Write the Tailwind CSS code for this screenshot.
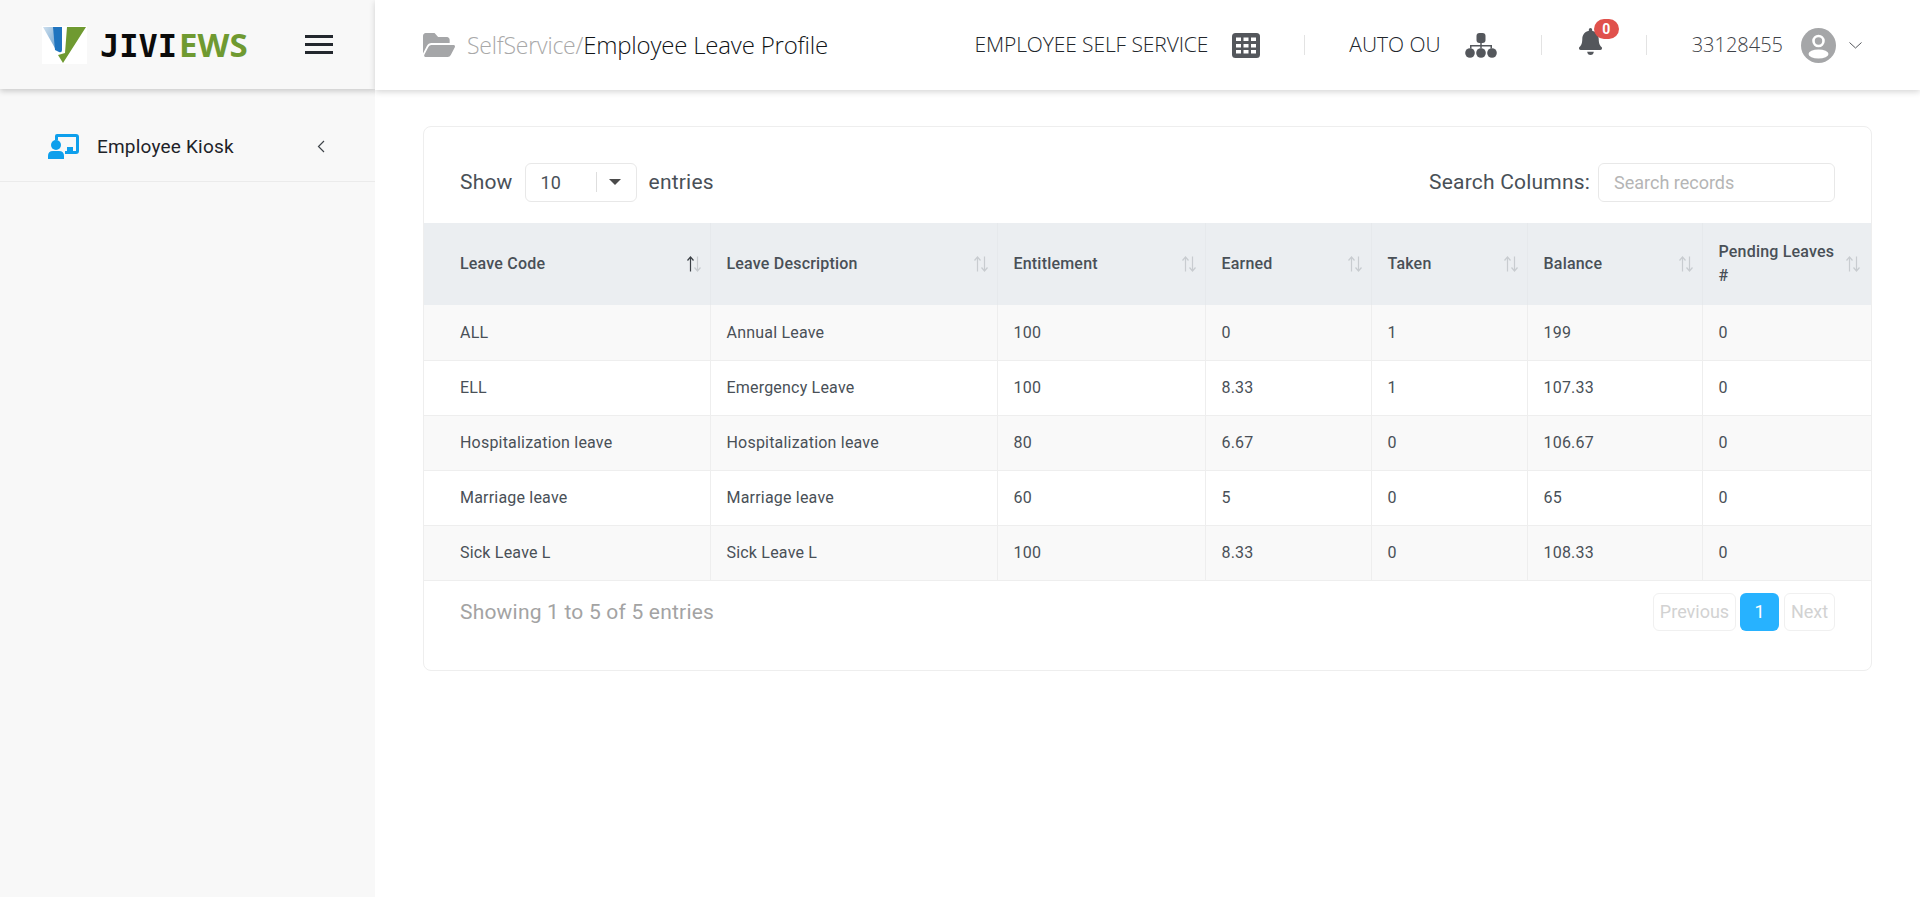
<!DOCTYPE html>
<html lang="en">
<head>
  <meta charset="UTF-8">
  <title>Employee Leave Profile</title>
  <script src="https://cdn.jsdelivr.net/npm/@tailwindcss/browser@4"></script>
</head>
<body class="bg-white font-['Roboto',sans-serif] text-[#495057] overflow-hidden">
<div class="flex h-[897px] w-[1920px]">

  <!-- sidebar -->
  <aside class="w-[375px] shrink-0 bg-[#f8f8f8] overflow-hidden">
    <div class="relative h-[89px] flex items-center pl-[42px] shadow-[0_2px_6px_rgba(0,0,0,0.2)]">
      <svg class="w-[45px] h-[38px] bg-white" viewBox="0 0 45 38">
        <defs>
          <linearGradient id="lb" x1="0" y1="0" x2="1" y2="1"><stop offset="0" stop-color="#cfe0ee"/><stop offset="1" stop-color="#6fa3cf"/></linearGradient>
        </defs>
        <path d="M1 1H14V24Z" fill="url(#lb)"/>
        <path d="M11 1H20V24Q20 27 17 26L13 24Z" fill="#1f74bf"/>
        <path d="M25 1H44L21 37L16 29L23 27Z" fill="#6f9a31"/>
      </svg>
      <div class="ml-[13px] flex items-baseline leading-none">
        <span class="font-['DejaVu_Sans_Mono',monospace] font-bold text-[32px] text-[#0b0b0b]">JIVI</span>
        <span class="font-['Open_Sans',sans-serif] font-bold text-[33px] text-[#6f9a31] ml-[2px]">EWS</span>
      </div>
      <div class="ml-auto mr-[42px] w-[28px] flex flex-col gap-[5px]">
        <span class="h-[3px] bg-[#23282e]"></span>
        <span class="h-[3px] bg-[#23282e]"></span>
        <span class="h-[3px] bg-[#23282e]"></span>
      </div>
    </div>
    <div class="h-[93px] border-b border-[#ebebeb] flex items-center pl-[48px] pr-[50px] pt-[22px]">
      <svg class="w-[31px] h-[25px]" viewBox="0 0 31 25" fill="#0e9fec">
        <path d="M9 0H28Q31 0 31 3V17Q31 20 28 20H17V17H28V3H10V6H7V2Q7 0 9 0Z"/>
        <rect x="19" y="13" width="6" height="4"/>
        <circle cx="8" cy="11" r="5"/>
        <path d="M0 25V22Q0 17 5 17H11Q16 17 16 22V25Z"/>
      </svg>
      <span class="ml-[18px] mt-[2px] text-[19px] tracking-[0.2px] text-[#1f2329]">Employee Kiosk</span>
      <svg class="ml-auto w-[8px] h-[13px]" viewBox="0 0 8 13" fill="none" stroke="#3f444a" stroke-width="1.2"><path d="M7 1L1.5 6.5L7 12"/></svg>
    </div>
  </aside>

  <div class="flex-1 min-w-0">
    <!-- top bar -->
    <header class="h-[90px] flex items-center pl-[48px] pr-[58px] shadow-[0_2px_6px_rgba(0,0,0,0.16)] font-['Open_Sans',sans-serif] text-[#22262b]">
      <svg class="w-[32px] h-[28px]" viewBox="0 32 576 448" fill="#a5a6a8" preserveAspectRatio="none"><path d="M572.694 292.093L500.27 416.248A63.997 63.997 0 0 1 444.989 448H45.025c-18.523 0-30.064-20.093-20.731-36.093l72.424-124.155A64 64 0 0 1 152 256h399.964c18.523 0 30.064 20.093 20.73 36.093zM152 224h328v-48c0-26.51-21.49-48-48-48H272l-64-64H48C21.49 64 0 85.49 0 112v278.046l69.077-118.418C86.214 242.25 117.989 224 152 224z"/></svg>
      <div class="ml-[12px] text-[23px] font-light tracking-[-0.2px]"><span class="text-[#a8a8a8]">SelfService/</span><span class="text-[24px] text-[#111417]">Employee Leave Profile</span></div>

      <span class="ml-auto text-[21px] font-light tracking-[-0.1px]">EMPLOYEE SELF SERVICE</span>
      <svg class="ml-[24px] w-[28px] h-[25px]" viewBox="0 0 28 25">
        <rect width="28" height="25" rx="3.5" fill="#54575c"/>
        <g fill="#fff">
          <rect x="4" y="4.5" width="5" height="3.5"/><rect x="11.5" y="4.5" width="5" height="3.5"/><rect x="19" y="4.5" width="5" height="3.5"/>
          <rect x="4" y="11" width="5" height="3.5"/><rect x="11.5" y="11" width="5" height="3.5"/><rect x="19" y="11" width="5" height="3.5"/>
          <rect x="4" y="17" width="5" height="3.5"/><rect x="11.5" y="17" width="5" height="3.5"/><rect x="19" y="17" width="5" height="3.5"/>
        </g>
      </svg>
      <span class="ml-[44px] mr-[44px] w-px h-[20px] bg-[#e3e3e3]"></span>
      <span class="text-[21px] font-light">AUTO OU</span>
      <svg class="ml-[24px] w-[32px] h-[25px]" viewBox="0 0 32 25" fill="#54575c">
        <rect x="11.5" y="0" width="9" height="10" rx="3"/>
        <path d="M15.25 10h1.5v2H27v3.5h-1.5V13.5h-8.75v2h-1.5v-2H6.5v2H5V12h10.25z"/>
        <circle cx="5" cy="20" r="4.8"/><circle cx="16" cy="20" r="4.8"/><circle cx="27" cy="20" r="4.8"/>
      </svg>
      <span class="ml-[44px] mr-[37px] w-px h-[20px] bg-[#e3e3e3]"></span>
      <div class="relative w-[23px] h-[27px] -mt-[8px]">
        <svg class="w-[23px] h-[27px]" viewBox="0 0 448 512" fill="#54575c" preserveAspectRatio="none"><path d="M224 512c35.32 0 63.97-28.65 63.97-64H160.03c0 35.35 28.65 64 63.97 64zm215.39-149.71c-19.32-20.76-55.47-51.99-55.47-154.29 0-77.7-54.48-139.9-127.94-155.16V32c0-17.67-14.32-32-31.98-32s-31.98 14.33-31.98 32v20.84C118.56 68.1 64.08 130.3 64.08 208c0 102.3-36.15 133.53-55.47 154.29-6 6.45-8.66 14.16-8.61 21.71.11 16.4 12.98 32 32.1 32h383.8c19.12 0 32-15.6 32.1-32 .05-7.55-2.61-15.27-8.61-21.71z"/></svg>
        <span class="absolute left-[15px] -top-[9px] w-[25px] h-[20px] rounded-[10px] bg-[#e0514c] text-white text-[14px] font-bold leading-[20px] text-center font-['Roboto',sans-serif]">0</span>
      </div>
      <span class="ml-[44px] mr-[45px] w-px h-[20px] bg-[#e3e3e3]"></span>
      <span class="text-[20px] font-light text-[#3f4348]">33128455</span>
      <svg class="ml-[18px] w-[35px] h-[35px]" viewBox="0 0 35 35">
        <circle cx="17.5" cy="17.5" r="17.5" fill="#a5a6a8"/>
        <circle cx="17.5" cy="13" r="5" fill="#a5a6a8" stroke="#fff" stroke-width="2.6"/>
        <ellipse cx="17.5" cy="26" rx="10" ry="4.5" fill="#fff"/>
      </svg>
      <svg class="ml-[13px] w-[13px] h-[7px]" viewBox="0 0 13 7" fill="none" stroke="#54575c" stroke-width="1"><path d="M.5 .5L6.5 6L12.5 .5"/></svg>
    </header>

    <!-- card -->
    <main class="pl-[48px] pt-[36px] pr-[48px]">
      <div class="h-[545px] border border-[#eeeeee] rounded-[8px] overflow-hidden">
        <div class="h-[96px] flex items-center justify-between pl-[36px] pr-[36px] pt-[14px] text-[21px] tracking-[0.2px]">
          <div class="flex items-center">
            <span class="mt-[2px]">Show</span>
            <div class="ml-[12px] w-[112px] h-[39px] border border-[#e8e8e8] rounded-[6px] flex items-center pl-[15px] text-[18px] tracking-normal">
              <span class="w-[55px] mt-[1px]">10</span>
              <span class="w-px h-[20px] bg-[#dedede]"></span>
              <span class="ml-[12px] w-0 h-0 border-x-[6px] border-x-transparent border-t-[6px] border-t-[#4b4b4b]"></span>
            </div>
            <span class="ml-[12px] mt-[2px]">entries</span>
          </div>
          <div class="flex items-center">
            <span class="mt-[2px]">Search Columns:</span>
            <input class="ml-[8px] w-[237px] h-[39px] border border-[#e8e8e8] rounded-[6px] px-[15px] text-[18px] tracking-normal placeholder-[#b5b5b5]" placeholder="Search records">
          </div>
        </div>

        <table class="w-full table-fixed border-collapse text-[16px] tracking-[0.2px]">
          <colgroup>
            <col class="w-[286px]"><col class="w-[287px]"><col class="w-[208px]"><col class="w-[166px]"><col class="w-[156px]"><col class="w-[175px]"><col>
          </colgroup>
          <thead class="bg-[#ebeef1] text-left">
            <tr class="h-[82px]">
              <th class="pl-[36px] pr-[8px] font-medium border-r border-[#e6e9ec]"><div class="flex items-center justify-between">Leave Code
                <svg class="w-[16px] h-[16px] shrink-0" viewBox="0 0 16 16" fill="none" stroke-width="1.2"><path stroke="#3b4046" d="M4.5 15.5V1M1.5 4.5L4.5 1L7.5 4.5"/><path stroke="#c8ccd0" d="M11.5 .5V15M8.5 11.5L11.5 15L14.5 11.5"/></svg></div></th>
              <th class="pl-[16px] pr-[8px] font-medium border-r border-[#e6e9ec]"><div class="flex items-center justify-between">Leave Description
                <svg class="w-[16px] h-[16px] shrink-0" viewBox="0 0 16 16" fill="none" stroke="#c8ccd0" stroke-width="1.2"><path d="M4.5 15.5V1M1.5 4.5L4.5 1L7.5 4.5"/><path d="M11.5 .5V15M8.5 11.5L11.5 15L14.5 11.5"/></svg></div></th>
              <th class="pl-[16px] pr-[8px] font-medium border-r border-[#e6e9ec]"><div class="flex items-center justify-between">Entitlement
                <svg class="w-[16px] h-[16px] shrink-0" viewBox="0 0 16 16" fill="none" stroke="#c8ccd0" stroke-width="1.2"><path d="M4.5 15.5V1M1.5 4.5L4.5 1L7.5 4.5"/><path d="M11.5 .5V15M8.5 11.5L11.5 15L14.5 11.5"/></svg></div></th>
              <th class="pl-[16px] pr-[8px] font-medium border-r border-[#e6e9ec]"><div class="flex items-center justify-between">Earned
                <svg class="w-[16px] h-[16px] shrink-0" viewBox="0 0 16 16" fill="none" stroke="#c8ccd0" stroke-width="1.2"><path d="M4.5 15.5V1M1.5 4.5L4.5 1L7.5 4.5"/><path d="M11.5 .5V15M8.5 11.5L11.5 15L14.5 11.5"/></svg></div></th>
              <th class="pl-[16px] pr-[8px] font-medium border-r border-[#e6e9ec]"><div class="flex items-center justify-between">Taken
                <svg class="w-[16px] h-[16px] shrink-0" viewBox="0 0 16 16" fill="none" stroke="#c8ccd0" stroke-width="1.2"><path d="M4.5 15.5V1M1.5 4.5L4.5 1L7.5 4.5"/><path d="M11.5 .5V15M8.5 11.5L11.5 15L14.5 11.5"/></svg></div></th>
              <th class="pl-[16px] pr-[8px] font-medium border-r border-[#e6e9ec]"><div class="flex items-center justify-between">Balance
                <svg class="w-[16px] h-[16px] shrink-0" viewBox="0 0 16 16" fill="none" stroke="#c8ccd0" stroke-width="1.2"><path d="M4.5 15.5V1M1.5 4.5L4.5 1L7.5 4.5"/><path d="M11.5 .5V15M8.5 11.5L11.5 15L14.5 11.5"/></svg></div></th>
              <th class="pl-[16px] pr-[10px] font-medium"><div class="flex items-center justify-between leading-[24px]">Pending Leaves #
                <svg class="w-[16px] h-[16px] shrink-0" viewBox="0 0 16 16" fill="none" stroke="#c8ccd0" stroke-width="1.2"><path d="M4.5 15.5V1M1.5 4.5L4.5 1L7.5 4.5"/><path d="M11.5 .5V15M8.5 11.5L11.5 15L14.5 11.5"/></svg></div></th>
            </tr>
          </thead>
          <tbody class="[&_td]:pl-[16px] [&_td]:pt-[1px] [&_td]:border-r [&_td]:border-[#eeeeee] [&_td:first-child]:pl-[36px] [&_td:last-child]:border-r-0 [&_tr]:h-[55px] [&_tr]:border-b [&_tr]:border-[#eeeeee]">
            <tr class="bg-[#f9f9f9]"><td>ALL</td><td>Annual Leave</td><td>100</td><td>0</td><td>1</td><td>199</td><td>0</td></tr>
            <tr><td>ELL</td><td>Emergency Leave</td><td>100</td><td>8.33</td><td>1</td><td>107.33</td><td>0</td></tr>
            <tr class="bg-[#f9f9f9]"><td>Hospitalization leave</td><td>Hospitalization leave</td><td>80</td><td>6.67</td><td>0</td><td>106.67</td><td>0</td></tr>
            <tr><td>Marriage leave</td><td>Marriage leave</td><td>60</td><td>5</td><td>0</td><td>65</td><td>0</td></tr>
            <tr class="bg-[#f9f9f9]"><td>Sick Leave L</td><td>Sick Leave L</td><td>100</td><td>8.33</td><td>0</td><td>108.33</td><td>0</td></tr>
          </tbody>
        </table>

        <div class="flex items-start justify-between pl-[36px] pr-[36px] pt-[12px]">
          <span class="text-[21px] leading-[39px] tracking-[0.2px] text-[#a3a3a3]">Showing 1 to 5 of 5 entries</span>
          <div class="flex items-center text-[18px]">
            <span class="w-[83px] h-[38px] border border-[#f0f0f0] rounded-[6px] flex items-center justify-center text-[#d2d2d2]">Previous</span>
            <span class="ml-[4px] w-[39px] h-[38px] rounded-[6px] bg-[#27b2ff] flex items-center justify-center text-white">1</span>
            <span class="ml-[5px] w-[51px] h-[38px] border border-[#f0f0f0] rounded-[6px] flex items-center justify-center text-[#d2d2d2]">Next</span>
          </div>
        </div>
      </div>
    </main>
  </div>
</div>
</body>
</html>
